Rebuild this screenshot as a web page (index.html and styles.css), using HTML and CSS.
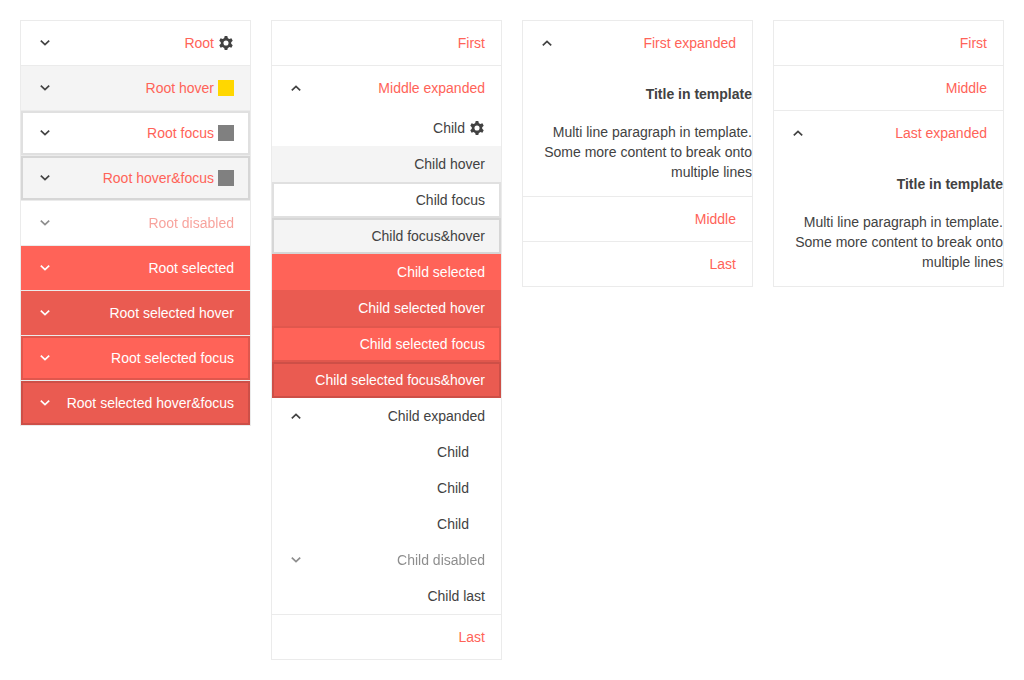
FILE: index.html
```
<!DOCTYPE html>
<html lang="en">
<head>
<meta charset="utf-8">
<title>PanelBar RTL</title>
<link rel="stylesheet" href="styles.css">
</head>
<body>
<svg class="defs" width="0" height="0" aria-hidden="true">
  <symbol id="down" viewBox="0 0 16 16"><path d="M3.800 5.700 8 9.700l4.200-4" fill="none" stroke="currentColor" stroke-width="1.700"/></symbol>
  <symbol id="up" viewBox="0 0 16 16"><path d="M3.800 10.300 8 6.300l4.200 4" fill="none" stroke="currentColor" stroke-width="1.700"/></symbol>
  <symbol id="gear" viewBox="0 0 16 16">
    <circle cx="8" cy="8" r="3.900" fill="none" stroke="currentColor" stroke-width="2.700"/>
    <g fill="currentColor">
      <path id="teeth" d="M6.700 1h2.600l.7 2.800H6zM6.700 15h2.600l.7-2.800H6z"/>
      <use href="#teeth" transform="rotate(60 8 8)"/>
      <use href="#teeth" transform="rotate(120 8 8)"/>
    </g>
  </symbol>
</svg>
<main class="grid">
  <ul class="panelbar">
    <li class="item"><div class="link"><svg class="icon"><use href="#gear"/></svg><span>Root</span><svg class="icon toggle"><use href="#down"/></svg></div></li>
    <li class="item"><div class="link hover"><i class="swatch gold"></i><span>Root hover</span><svg class="icon toggle"><use href="#down"/></svg></div></li>
    <li class="item"><div class="link focus"><i class="swatch"></i><span>Root focus</span><svg class="icon toggle"><use href="#down"/></svg></div></li>
    <li class="item"><div class="link hover focus"><i class="swatch"></i><span>Root hover&amp;focus</span><svg class="icon toggle"><use href="#down"/></svg></div></li>
    <li class="item"><div class="link disabled"><span>Root disabled</span><svg class="icon toggle"><use href="#down"/></svg></div></li>
    <li class="item"><div class="link selected"><span>Root selected</span><svg class="icon toggle"><use href="#down"/></svg></div></li>
    <li class="item"><div class="link selected hover"><span>Root selected hover</span><svg class="icon toggle"><use href="#down"/></svg></div></li>
    <li class="item"><div class="link selected focus"><span>Root selected focus</span><svg class="icon toggle"><use href="#down"/></svg></div></li>
    <li class="item"><div class="link selected hover focus"><span>Root selected hover&amp;focus</span><svg class="icon toggle"><use href="#down"/></svg></div></li>
  </ul>

  <ul class="panelbar">
    <li class="item"><div class="link"><span>First</span></div></li>
    <li class="item">
      <div class="link"><span>Middle expanded</span><svg class="icon toggle"><use href="#up"/></svg></div>
      <ul class="group">
        <li><div class="link"><svg class="icon"><use href="#gear"/></svg><span>Child</span></div></li>
        <li><div class="link hover"><span>Child hover</span></div></li>
        <li><div class="link focus"><span>Child focus</span></div></li>
        <li><div class="link hover focus"><span>Child focus&amp;hover</span></div></li>
        <li><div class="link selected"><span>Child selected</span></div></li>
        <li><div class="link selected hover"><span>Child selected hover</span></div></li>
        <li><div class="link selected focus"><span>Child selected focus</span></div></li>
        <li><div class="link selected hover focus"><span>Child selected focus&amp;hover</span></div></li>
        <li>
          <div class="link"><span>Child expanded</span><svg class="icon toggle"><use href="#up"/></svg></div>
          <ul class="group nested">
            <li><div class="link"><span>Child</span></div></li>
            <li><div class="link"><span>Child</span></div></li>
            <li><div class="link"><span>Child</span></div></li>
          </ul>
        </li>
        <li><div class="link disabled"><span>Child disabled</span><svg class="icon toggle"><use href="#down"/></svg></div></li>
        <li><div class="link"><span>Child last</span></div></li>
      </ul>
    </li>
    <li class="item"><div class="link"><span>Last</span></div></li>
  </ul>

  <ul class="panelbar">
    <li class="item">
      <div class="link"><span>First expanded</span><svg class="icon toggle"><use href="#up"/></svg></div>
      <div class="content"><h4>Title in template</h4><p dir="ltr">Multi line paragraph in template. Some more content to break onto multiple lines</p></div>
    </li>
    <li class="item"><div class="link"><span>Middle</span></div></li>
    <li class="item"><div class="link"><span>Last</span></div></li>
  </ul>

  <ul class="panelbar">
    <li class="item"><div class="link"><span>First</span></div></li>
    <li class="item"><div class="link"><span>Middle</span></div></li>
    <li class="item">
      <div class="link"><span>Last expanded</span><svg class="icon toggle"><use href="#up"/></svg></div>
      <div class="content"><h4>Title in template</h4><p dir="ltr">Multi line paragraph in template. Some more content to break onto multiple lines</p></div>
    </li>
  </ul>
</main>
</body>
</html>
```
FILE: styles.css
```
* { box-sizing: border-box; }
body {
  margin: 0;
  background: #fff;
  color: #424242;
  font: 14px/20px "Liberation Sans", Arial, sans-serif;
}
.defs { display: block; }
.grid {
  display: grid;
  grid-template-columns: repeat(4, 1fr);
  align-items: start;
  gap: 20px;
  padding: 20px;
}
ul { list-style: none; margin: 0; padding: 0; }
.panelbar { direction: rtl; border: 1px solid #ebebeb; }
.item + .item { border-top: 1px solid #ebebeb; }
.link {
  display: flex;
  align-items: center;
  gap: 4px;
  padding: 12px 16px;
  white-space: nowrap;
}
.item > .link { color: #ff6358; }
.group .link { padding: 8px 16px; }
.nested .link { padding-right: 32px; }
.icon { width: 16px; height: 16px; flex: none; color: #424242; }
.toggle { margin-right: auto; }
.swatch { width: 16px; height: 16px; flex: none; background: #808080; }
.gold { background: #ffd700; }
.link.hover { background: #f4f4f4; }
.link.focus { box-shadow: inset 0 0 0 2px rgba(0, 0, 0, .12); }
.link.disabled { opacity: .6; filter: grayscale(.1); }
.link.selected { background: #ff6358; color: #fff; }
.link.selected .icon { color: #fff; }
.link.selected.hover { background: #ea5b51; }
.content h4 { margin: 0; padding: 19px 0 18px; font-size: 14px; font-weight: 700; }
.content p { margin: 0; padding-bottom: 14px; text-align: right; }
```
